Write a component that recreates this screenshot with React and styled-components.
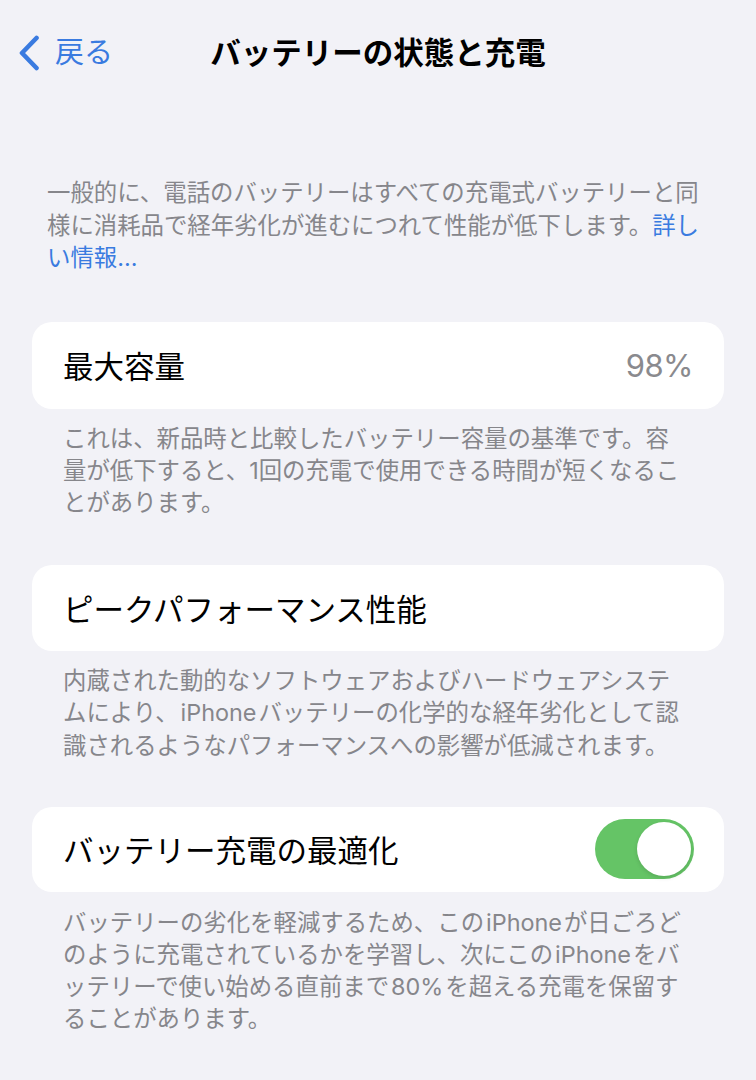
import React from "react";
import styled, { createGlobalStyle } from "styled-components";

const Global = createGlobalStyle`
  html, body { margin: 0; padding: 0; background: #f2f2f7; }
  body {
    font-family: "Inter", "Noto Sans CJK JP", sans-serif;
    -webkit-font-smoothing: antialiased;
  }
`;

const Page = styled.div`
  width: 756px;
  min-height: 1080px;
  background: #f2f2f7;
  display: flex;
  flex-direction: column;
`;

const Nav = styled.div`
  position: relative;
  height: 104px;
  display: flex;
  align-items: center;
  justify-content: center;
`;

const Back = styled.div`
  position: absolute;
  left: 18px;
  top: 35px;
  display: flex;
  align-items: center;
  gap: 15px;
  color: #3a7be0;
  font-size: 29px;
  line-height: 36px;
`;

const Title = styled.h1`
  margin: -2px 0 0;
  font-size: 30.5px;
  font-weight: 700;
  color: #000;
  letter-spacing: 0;
`;

const Intro = styled.p`
  margin: 73px 0 0;
  padding: 0 0 0 47px;
  font-size: 23.4px;
  line-height: 32.5px;
  color: #86868b;
`;

const Link = styled.span`
  color: #3a7be0;
`;

const Card = styled.div`
  margin: ${(p) => p.$top}px 32px 0 32px;
  height: ${(p) => p.$h}px;
  background: #fff;
  border-radius: 20px;
  display: flex;
  align-items: center;
  justify-content: space-between;
  padding: 0 31px;
  box-sizing: border-box;
`;

const Label = styled.span`
  font-size: 30.5px;
  color: #000;
`;

const Value = styled.span`
  font-size: 31px;
  color: #8a8a8e;
  letter-spacing: -0.5px;
`;

const Footer = styled.p`
  margin: ${(p) => p.$top}px 0 0;
  padding: 0 0 0 63px;
  font-size: 23.4px;
  line-height: 32.2px;
  color: #86868b;
`;

const Latin = styled.span`
  margin: 0 2px;
`;

const Toggle = styled.div`
  width: 99px;
  height: 60px;
  border-radius: 30px;
  background: #65c466;
  display: flex;
  align-items: center;
  justify-content: flex-end;
  padding: 0 3px;
  box-sizing: border-box;
  margin-right: -1px;
`;

const Knob = styled.div`
  width: 54px;
  height: 54px;
  border-radius: 50%;
  background: #fff;
  box-shadow: 0 2px 4px rgba(0, 0, 0, 0.12);
`;

const Chevron = () => (
  <svg width="22" height="36" viewBox="0 0 22 36" fill="none">
    <path
      d="M18.5 3 L4 18 L18.5 33"
      stroke="#3a7be0"
      strokeWidth="4.6"
      strokeLinecap="round"
      strokeLinejoin="round"
    />
  </svg>
);

export default function App() {
  return (
    <Page>
      <Global />
      <Nav>
        <Back>
          <Chevron />
          <span>戻る</span>
        </Back>
        <Title>バッテリーの状態と充電</Title>
      </Nav>
      <Intro>
        一般的に、電話のバッテリーはすべての充電式バッテリーと同
        <br />
        様に消耗品で経年劣化が進むにつれて性能が低下します。<Link>詳し</Link>
        <br />
        <Link>い情報...</Link>
      </Intro>

      <Card $top={47} $h={87}>
        <Label>最大容量</Label>
        <Value>98%</Value>
      </Card>
      <Footer $top={14}>
        これは、新品時と比較したバッテリー容量の基準です。容
        <br />
        量が低下すると、1回の充電で使用できる時間が短くなるこ
        <br />
        とがあります。
      </Footer>

      <Card $top={46} $h={86}>
        <Label>ピークパフォーマンス性能</Label>
      </Card>
      <Footer $top={14}>
        内蔵された動的なソフトウェアおよびハードウェアシステ
        <br />
        ムにより、<Latin>iPhone</Latin>バッテリーの化学的な経年劣化として認
        <br />
        識されるようなパフォーマンスへの影響が低減されます。
      </Footer>

      <Card $top={45} $h={85}>
        <Label>バッテリー充電の最適化</Label>
        <Toggle>
          <Knob />
        </Toggle>
      </Card>
      <Footer $top={15}>
        バッテリーの劣化を軽減するため、この<Latin>iPhone</Latin>が日ごろど
        <br />
        のように充電されているかを学習し、次にこの<Latin>iPhone</Latin>をバ
        <br />
        ッテリーで使い始める直前まで<Latin>80%</Latin>を超える充電を保留す
        <br />
        ることがあります。
      </Footer>
    </Page>
  );
}
